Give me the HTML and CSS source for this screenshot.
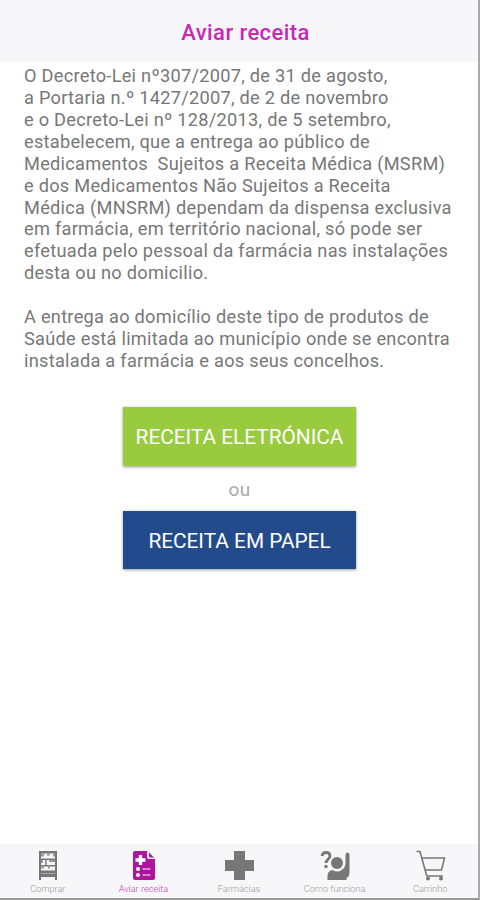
FILE: index.html
```html
<!DOCTYPE html>
<html lang="pt">
<head>
<meta charset="UTF-8">
<title>Aviar receita</title>
<link rel="stylesheet" href="styles.css">
</head>
<body>
<div class="app">
    <header class="header">
        <h1>Aviar receita</h1>
    </header>
    <main class="content">
        <p>O Decreto-Lei nº307/2007, de 31 de agosto,
a Portaria n.º 1427/2007, de 2 de novembro
e o Decreto-Lei nº 128/2013, de 5 setembro,
estabelecem, que a entrega ao público de
Medicamentos  Sujeitos a Receita Médica (MSRM)
e dos Medicamentos Não Sujeitos a Receita
Médica (MNSRM) dependam da dispensa exclusiva
em farmácia, em território nacional, só pode ser
efetuada pelo pessoal da farmácia nas instalações
desta ou no domicilio.</p>
        <p>A entrega ao domicílio deste tipo de produtos de
Saúde está limitada ao município onde se encontra
instalada a farmácia e aos seus concelhos.</p>
        <div class="actions">
            <button class="btn btn-green">RECEITA ELETRÓNICA</button>
            <span class="or">ou</span>
            <button class="btn btn-blue">RECEITA EM PAPEL</button>
        </div>
    </main>
    <nav class="tabbar">
        <a class="tab">
            <svg width="36" height="32" viewBox="0 0 36 32">
                <path fill="#777" d="M9 1h18v29h-2v-3H11v3H9z"/>
                <path fill="#f7f7fa" d="M11 3.500h14v5H11zM11 10h14v5H11zM11 16.500h14v4H11z"/>
                <path fill="#999" d="M11 3.500h3v3h-3zM17 3.500h3v2h-3zM23 3.500h2v3h-2zM11 10h2v3h-2zM15 10h2v5h-2zM19 10h6v2h-6zM11 16.500h3v2h-3zM18 16.500h2v2h-2z"/>
                <path stroke="#aaa" stroke-width="1" d="M11 23.500h14"/>
            </svg>
            <span>Comprar</span>
        </a>
        <a class="tab current">
            <svg width="36" height="32" viewBox="0 0 36 32">
                <path fill="#ad159f" d="M10 1h12l8 8v19q0 2-2 2H10q-2 0-2-2V3q0-2 2-2z"/>
                <path fill="#f7f7fa" d="M22 1l8 8h-6q-2 0-2-2z"/>
                <path fill="#ad159f" d="M24 2.500l5 5h-3.500q-1.500 0-1.500-1.500z"/>
                <path stroke="#fff" stroke-width="3.4" d="M15.500 5v10M10.500 10h10"/>
                <circle cx="13" cy="19" r="2" fill="#fff"/>
                <circle cx="13" cy="25" r="2" fill="#fff"/>
                <path stroke="#e7a5e0" stroke-width="1.300" d="M17.500 19h8M17.500 25h8"/>
            </svg>
            <span>Aviar receita</span>
        </a>
        <a class="tab">
            <svg width="36" height="32" viewBox="0 0 36 32">
                <path fill="#777" d="M13 1h11v9h9v11h-9v9H13v-9H4V10h9z"/>
            </svg>
            <span>Farmácias</span>
        </a>
        <a class="tab">
            <svg width="36" height="32" viewBox="0 0 36 32">
                <path fill="none" stroke="#777" stroke-width="2.800" d="M5 6q.5-3.500 4-3.500 4 0 4 3.500c0 3-4 3.500-4 7"/>
                <circle cx="9" cy="16.500" r="1.700" fill="#777"/>
                <circle cx="20" cy="13" r="6" fill="#777"/>
                <path fill="#777" d="M10.500 30v-4q0-5 5-6 5 3 9 0 4-2 4-7V5q0-2.500 2-2.500t2 2.500v17q0 5-3 6v2z"/>
            </svg>
            <span>Como funciona</span>
        </a>
        <a class="tab">
            <svg width="36" height="32" viewBox="0 0 36 32">
                <path fill="none" stroke="#777" stroke-width="1.600" d="M4.500 1.500H8L14.500 25q.3 1 1.500 1h15M10 8h22.500l-3 12H13.500"/>
                <circle cx="16" cy="28.500" r="2" fill="#777"/>
                <circle cx="29" cy="28.500" r="2" fill="#777"/>
            </svg>
            <span>Carrinho</span>
        </a>
    </nav>
</div>
</body>
</html>
```
FILE: styles.css
```css
html,body,h1,p{
    margin: 0;
    padding: 0;
}
body{
    font-family: Roboto, sans-serif;
}
.app{
    box-sizing: border-box;
    width: 480px;
    height: 900px;
    display: flex;
    flex-direction: column;
    border-right: 2px solid #aaa;
    border-bottom: 2px solid #999;
    background: #fff;
}
.header{
    height: 62px;
    background: #f7f7fa;
}
.header h1{
    padding-left: 13px;
    font-size: 22px;
    line-height: 65px;
    font-weight: 500;
    letter-spacing: .4px;
    text-align: center;
    color: #c42ab3;
}
.content{
    flex: 1;
    padding: 3px 0 0 24px;
}
.content p{
    margin-bottom: 22px;
    font-size: 18.2px;
    line-height: 21.92px;
    letter-spacing: .27px;
    white-space: pre;
    color: #777;
}
.actions{
    display: flex;
    flex-direction: column;
    align-items: center;
    width: 431px;
    margin-top: 35px;
}
.btn{
    width: 233px;
    height: 59px;
    padding: 2px 0 0;
    border: none;
    font: 20.8px Roboto, sans-serif;
    color: #fff;
    box-shadow: 0 1px 3px rgba(0,0,0,.4);
}
.btn-green{
    background: #99cb3e;
}
.btn-blue{
    height: 58px;
    background: #234b8c;
}
.or{
    height: 45px;
    font-size: 19px;
    line-height: 47px;
    letter-spacing: .3px;
    color: #aaa;
}
.tabbar{
    display: flex;
    height: 54px;
    background: #f7f7fa;
}
.tab{
    flex: 1;
    display: flex;
    flex-direction: column;
    align-items: center;
    padding-top: 6px;
    font-size: 9.2px;
    font-weight: 300;
    line-height: 14px;
    color: #999;
}
.tab.current{
    color: #c23db5;
}
```
